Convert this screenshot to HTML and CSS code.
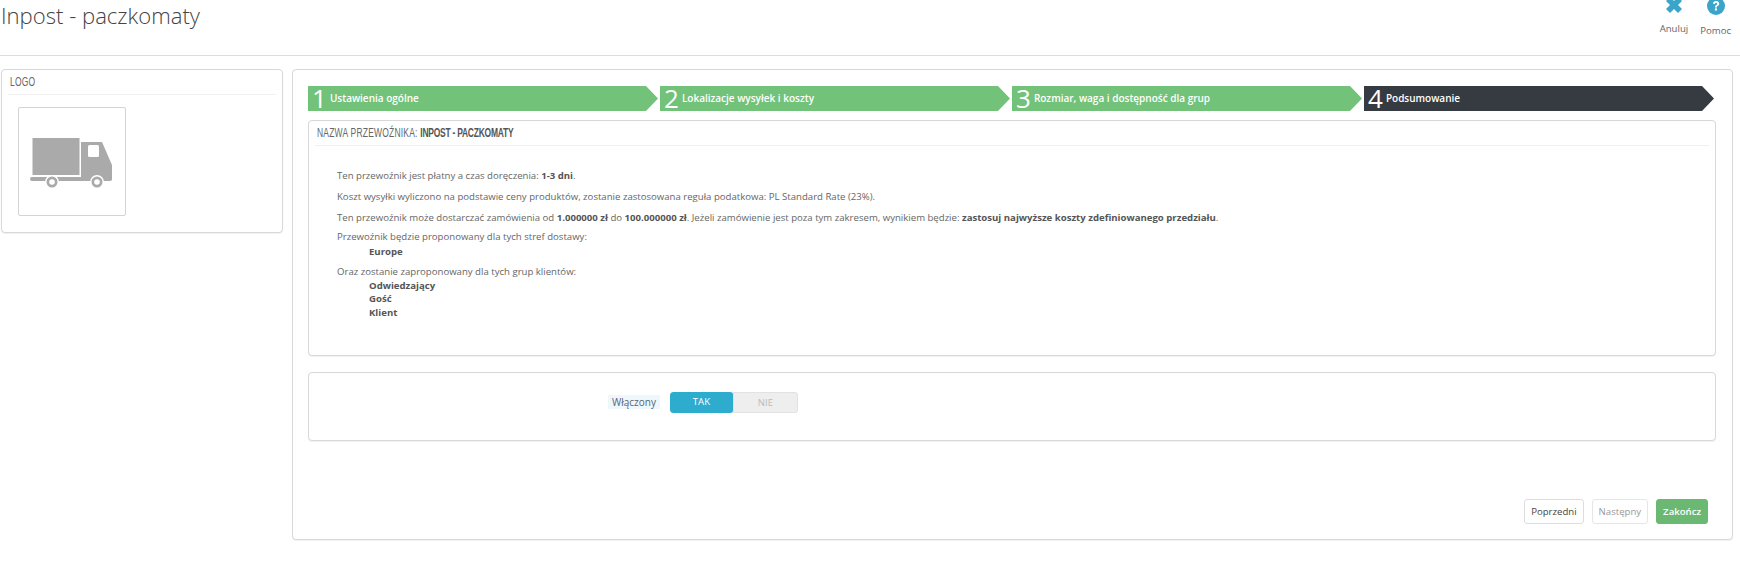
FILE: index.html
```html
<!DOCTYPE html>
<html lang="pl">
<head>
<meta charset="utf-8">
<title>Inpost - paczkomaty</title>
<link rel="stylesheet" href="styles.css">
</head>
<body>
<header class="page-head">
  <h1 class="page-title">Inpost - paczkomaty</h1>
  <nav class="toolbar">
    <a class="tool">
      <svg class="tool-icon" width="16" height="16" viewBox="0 0 16 16"><path d="M0 4 4 0 8 4 12 0 16 4 12 8 16 12 12 16 8 12 4 16 0 12 4 8Z" fill="#3aa5c9"/></svg>
      <span>Anuluj</span>
    </a>
    <a class="tool">
      <svg class="tool-icon" width="18" height="18" viewBox="0 0 18 18"><circle cx="9" cy="9" r="9" fill="#3aa5c9"/><path d="M6 6.8C6 5 7.300 4 9.100 4 10.900 4 12.200 5 12.200 6.700 12.200 8 11.400 8.600 10.600 9.100 10 9.500 9.900 9.800 9.900 10.500H8C8 9.200 8.300 8.600 9.200 8 9.900 7.500 10.200 7.200 10.200 6.700 10.200 6.100 9.800 5.800 9.100 5.800 8.400 5.800 8 6.200 7.900 6.900Z" fill="#fff"/><rect x="7.900" y="11.400" width="2.100" height="2.100" fill="#fff"/></svg>
      <span>Pomoc</span>
    </a>
  </nav>
</header>
<main class="layout">
  <aside class="panel side">
    <h3 class="panel-head"><span class="narrow">Logo</span></h3>
    <div class="logo-box">
      <svg class="truck" width="84" height="50" viewBox="0 0 84 50">
        <rect x="2.500" y="0" width="47" height="37" fill="#aaa"/>
        <path d="M51 4H72L82 27V42H51Z" fill="#aaa"/>
        <rect x="0" y="39" width="82" height="4" rx="2" fill="#aaa"/>
        <rect x="58" y="7" width="11" height="12" rx="1.500" fill="#fff"/>
        <circle cx="22" cy="44" r="7" fill="#fff"/><circle cx="22" cy="44" r="5.500" fill="#aaa"/><circle cx="22" cy="44" r="2.800" fill="#fff"/>
        <circle cx="67" cy="44" r="7" fill="#fff"/><circle cx="67" cy="44" r="5.500" fill="#aaa"/><circle cx="67" cy="44" r="2.800" fill="#fff"/>
      </svg>
    </div>
  </aside>
  <section class="panel wizard">
    <ol class="steps">
      <li class="step"><span class="step-num">1</span><span class="step-label">Ustawienia ogólne</span></li>
      <li class="step"><span class="step-num">2</span><span class="step-label">Lokalizacje wysyłek i koszty</span></li>
      <li class="step"><span class="step-num">3</span><span class="step-label">Rozmiar, waga i dostępność dla grup</span></li>
      <li class="step step-current"><span class="step-num">4</span><span class="step-label">Podsumowanie</span></li>
    </ol>
    <div class="panel summary">
      <h3 class="panel-head summary-head"><span class="narrow">Nazwa przewoźnika: <strong>Inpost - paczkomaty</strong></span></h3>
      <div class="summary-body">
        <p>Ten przewoźnik jest płatny a czas doręczenia: <b>1-3 dni</b>.</p>
        <p>Koszt wysyłki wyliczono na podstawie ceny produktów, zostanie zastosowana reguła podatkowa: PL Standard Rate (23%).</p>
        <p>Ten przewoźnik może dostarczać zamówienia od <b>1.000000 zł</b> do <b>100.000000 zł</b>. Jeżeli zamówienie jest poza tym zakresem, wynikiem będzie: <b>zastosuj najwyższe koszty zdefiniowanego przedziału</b>.</p>
        <div class="group">
          <p>Przewoźnik będzie proponowany dla tych stref dostawy:</p>
          <ul><li>Europe</li></ul>
        </div>
        <div class="group">
          <p>Oraz zostanie zaproponowany dla tych grup klientów:</p>
          <ul><li>Odwiedzający</li><li>Gość</li><li>Klient</li></ul>
        </div>
      </div>
    </div>
    <div class="panel enable">
      <span class="enable-label">Włączony</span>
      <div class="switch"><span class="switch-on">TAK</span><span class="switch-off">NIE</span></div>
    </div>
    <div class="actions">
      <button class="btn">Poprzedni</button>
      <button class="btn btn-off">Następny</button>
      <button class="btn btn-finish">Zakończ</button>
    </div>
  </section>
</main>
</body>
</html>
```
FILE: styles.css
```css
* { box-sizing: border-box; }
html, body { margin: 0; padding: 0; }
body {
  width: 1740px;
  height: 574px;
  overflow: hidden;
  background: #fff;
  color: #666;
  font-family: "Open Sans", sans-serif;
  font-size: 9.6px;
}
.page-head {
  height: 56px;
  display: flex;
  justify-content: space-between;
  border-bottom: 1px solid #dcdcdc;
  overflow: hidden;
}
.page-title {
  margin: 0 0 0 1px;
  font-size: 22.100px;
  font-weight: 300;
  line-height: 30px;
  color: #444;
}
.toolbar { display: flex; gap: 12px; padding-right: 9px; }
.tool {
  display: flex;
  flex-direction: column;
  align-items: center;
  font-size: 9.600px;
  line-height: 14px;
  color: #666;
}
.tool-icon { margin-top: -3px; margin-bottom: 9px; }
.tool:first-child .tool-icon { margin-bottom: 9px; }
.layout {
  display: flex;
  align-items: flex-start;
  gap: 9px;
  padding: 13px 7px 0 1px;
}
.panel {
  background: #fff;
  border: 1px solid #d8d8d8;
  border-radius: 4px;
  box-shadow: 0 1px 1px rgba(0, 0, 0, .06);
}
.side { width: 282px; height: 164px; flex: none; }
.panel-head {
  margin: 0 6px;
  height: 25px;
  padding: 0 2px;
  border-bottom: 1px solid #f0f0f0;
  font-family: "Liberation Sans", sans-serif;
  font-size: 12px;
  font-weight: 400;
  line-height: 24px;
  text-transform: uppercase;
  color: #666;
}
.narrow {
  display: inline-block;
  transform: scaleX(.705);
  transform-origin: left center;
  white-space: nowrap;
  letter-spacing: .33px;
}
.logo-box {
  width: 108px;
  height: 109px;
  margin: 12px 0 0 16px;
  padding-top: 3px;
  display: flex;
  align-items: center;
  justify-content: center;
  border: 1px solid #d4d4d4;
  border-radius: 2px;
}
.wizard {
  flex: 1;
  height: 471px;
  padding: 16px 16px 0 15px;
  display: flex;
  flex-direction: column;
}
.steps {
  list-style: none;
  margin: 0;
  padding: 0;
  display: flex;
  gap: 2px;
}
.step {
  width: 350px;
  height: 25px;
  padding-left: 4px;
  display: flex;
  align-items: center;
  gap: 3px;
  background: #72c279;
  color: #fff;
  clip-path: polygon(0 0, 338px 0, 350px 50%, 338px 100%, 0 100%);
}
.step-current { background: #363a41; }
.step-num { font-size: 26px; font-weight: 400; line-height: 25px; }
.step-label { font-size: 10px; font-weight: 600; line-height: 25px; }
.summary { height: 236px; margin-top: 9px; width: 1408px; }
.summary-head { line-height: 24px; }
.summary-head strong { font-weight: 700; color: #555; letter-spacing: -.33px; }
.summary-body { padding: 23px 0 0 28px; line-height: 14px; }
.summary-body p { margin: 0 0 7px; }
.summary-body p:nth-child(3) { margin-bottom: 5px; }
.group p { margin-bottom: 1px; }
.group + .group p { margin-bottom: 0; }
.group { margin-bottom: 6px; }
.summary-body b { font-weight: 700; color: #555; }
.group ul { list-style: none; margin: 0; padding: 0 0 0 32px; font-weight: 700; color: #555; line-height: 13.500px; }
.enable {
  width: 1408px;
  height: 69px;
  margin-top: 16px;
  padding: 19px 0 0 299px;
  display: flex;
  align-items: flex-start;
  gap: 10px;
}
.enable-label {
  margin-top: 3px;
  padding: 0 4px;
  height: 14px;
  line-height: 14px;
  background: #eef7fb;
  color: #567;
  font-size: 10px;
}
.switch {
  display: flex;
  width: 128px;
  height: 21px;
  border-radius: 3px;
  overflow: hidden;
  background: #eee;
  line-height: 19px;
  text-align: center;
}
.switch-on { flex: 1; background: #2eacce; color: #fff; border-radius: 3px; }
.switch-off { flex: 1; color: #bbb; border: 1px solid #e2e2e2; border-radius: 0 3px 3px 0; }
.actions {
  display: flex;
  justify-content: flex-end;
  gap: 8px;
  margin-top: 58px;
  padding-right: 8px;
}
.btn {
  height: 25px;
  padding: 0 6px;
  border: 1px solid #ddd;
  border-radius: 3px;
  background: #fff;
  color: #444;
  font-family: "Open Sans", sans-serif;
  font-size: 9.600px;
}
.btn-off { color: #999; border-color: #e6e6e6; }
.btn-finish { border-color: #6ab871; background: #6ab871; color: #fff; font-weight: 600; }
```
